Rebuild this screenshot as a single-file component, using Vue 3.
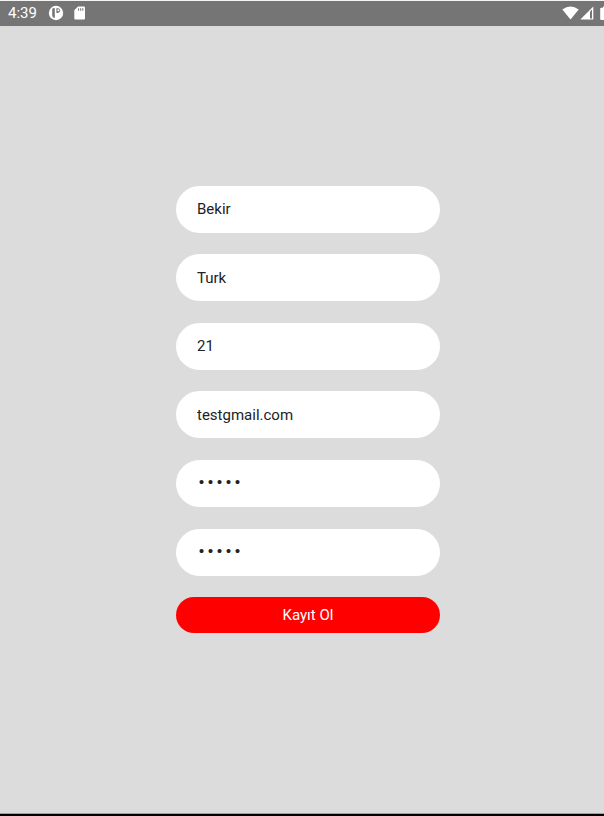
<script setup>
import { reactive } from 'vue'

const fields = reactive([
  { id: 'first-name', label: 'Ad', type: 'text', value: 'Bekir' },
  { id: 'last-name', label: 'Soyad', type: 'text', value: 'Turk' },
  { id: 'age', label: 'Yaş', type: 'text', value: '21' },
  { id: 'email', label: 'E-posta', type: 'text', value: 'testgmail.com' },
  { id: 'password', label: 'Şifre', type: 'password', value: '12345' },
  { id: 'password-repeat', label: 'Şifre tekrar', type: 'password', value: '12345' }
])
</script>

<template>
  <div class="screen">
    <header class="status">
      <span class="time">4:39</span>
      <svg class="app-icon" width="16" height="16" viewBox="0 0 16 16" aria-hidden="true">
        <circle cx="8" cy="8" r="7.2" fill="#fff" />
        <path d="M4.2 3.8Q5.2 3 6.8 3V13Q4.2 12.4 4.2 10.4z" fill="#757575" />
        <path d="M8.4 3.2H10.2Q12.2 3.6 12.2 5.6Q12 7.8 9.8 8H8.4z" fill="#757575" />
        <circle cx="10.4" cy="5.3" r="1" fill="#fff" />
      </svg>
      <svg class="card-icon" width="12" height="14" viewBox="0 0 12 14" aria-hidden="true">
        <path d="M4 0.5H9.9Q11 0.5 11 1.6V12.4Q11 13.5 9.9 13.5H1.4Q0.3 13.5 0.3 12.4V4.3z" fill="#fff" />
        <path d="M4.6 2.2v2.6M6.7 2.2v2.6M8.8 2.2v2.6" stroke="#757575" stroke-width="1" />
      </svg>
      <div class="signals">
        <svg width="17" height="14" viewBox="0 0 17 14" aria-hidden="true">
          <path d="M0.3 3.6Q8.5 -2.8 16.7 3.6L8.5 13.6z" fill="#fff" />
        </svg>
        <svg width="14" height="14" viewBox="0 0 14 14" aria-hidden="true">
          <path d="M13.3 0.6V13.6H0.3z" fill="#fff" />
          <path d="M10 5.4L12 3.4V12.4H10z" fill="#757575" />
        </svg>
        <svg class="battery" width="4" height="14" viewBox="0 0 4 14" aria-hidden="true">
          <path d="M1.2 1.8H3V0.4H5V14H1.2Q0.2 14 0.2 13V2.8Q0.2 1.8 1.2 1.8z" fill="#fff" />
        </svg>
      </div>
    </header>

    <main class="content">
      <form class="form" @submit.prevent>
        <input
          v-for="field in fields"
          :id="field.id"
          :key="field.id"
          v-model="field.value"
          class="field"
          :class="{ secret: field.type === 'password' }"
          :type="field.type"
          :aria-label="field.label"
        />
        <button class="submit" type="submit">Kayıt Ol</button>
      </form>
    </main>
  </div>
</template>

<style>
body {
  margin: 0;
  background: #dcdcdc;
}
</style>

<style scoped>
.screen {
  box-sizing: border-box;
  min-height: 100vh;
  display: flex;
  flex-direction: column;
  background: #dcdcdc;
  border-top: 1px solid #f4f4f4;
  border-bottom: 2px solid #000;
  font-family: Roboto, "Liberation Sans", sans-serif;
}

.status {
  height: 24px;
  display: flex;
  align-items: center;
  padding: 0 0 1px 8px;
  background: #757575;
  color: #fff;
}

.time {
  font-size: 15px;
  line-height: 24px;
}

.app-icon {
  margin-left: 11px;
}

.card-icon {
  margin-left: 10px;
}

.signals {
  display: flex;
  align-items: center;
  gap: 1px;
  margin-left: auto;
}

.battery {
  margin-left: 5px;
}

.content {
  flex: 1;
  display: flex;
  align-items: center;
  justify-content: center;
  padding: 0 0 20px 12px;
  border-bottom: 1px solid #a0a0a0;
}

.form {
  width: 264px;
  min-height: 448px;
  display: flex;
  flex-direction: column;
  justify-content: space-between;
}

.field {
  box-sizing: border-box;
  width: 100%;
  height: 47px;
  padding: 0 21px;
  border: 0;
  border-radius: 24px;
  outline: 0;
  background: #fff;
  color: #222;
  font-family: inherit;
  font-size: 15px;
}

.secret {
  font-family: "Liberation Mono", monospace;
}

.submit {
  height: 36px;
  padding: 0;
  border: 0;
  border-radius: 18px;
  background: #f00;
  color: #fff;
  font-family: inherit;
  font-size: 15px;
  line-height: 36px;
  cursor: pointer;
}
</style>
